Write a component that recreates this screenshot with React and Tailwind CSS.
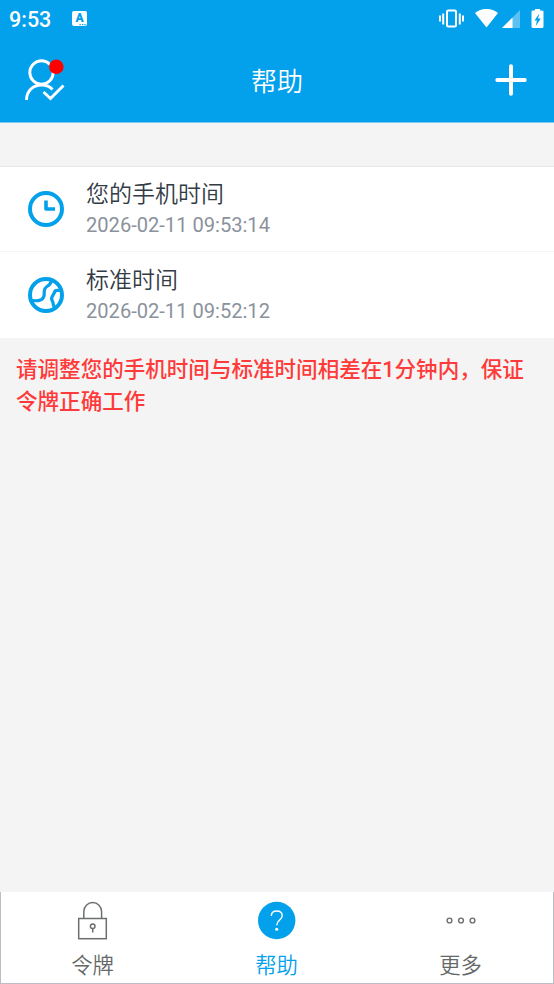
import React, { useState } from 'react'

const ProfileIcon = () => (
  <svg width="44" height="44" viewBox="0 0 44 44" fill="none" stroke="#fff" strokeWidth="2.9">
    <circle cx="19.500" cy="14.500" r="11.700" />
    <path d="M4.500 42C4.500 33 11 27 19.500 27c4.500 0 8.500 1.600 11 4.500" />
    <path d="M21.500 34l7 6.500L41.500 27.500" />
    <circle cx="34.300" cy="8.800" r="7.300" fill="#f00" stroke="none" />
  </svg>
)

const ClockIcon = () => (
  <svg width="36" height="36" viewBox="0 0 36 36" fill="none" stroke="#03a0eb" strokeWidth="4">
    <circle cx="18" cy="18" r="16" />
    <path d="M18 9.500V18h9" strokeWidth="3.600" strokeLinejoin="round" />
  </svg>
)

const GlobeIcon = () => (
  <svg width="36" height="36" viewBox="0 0 36 36" fill="none" stroke="#03a0eb">
    <circle cx="18" cy="18" r="16" strokeWidth="4" />
    <path d="M2 23c4 1 8 1 11-.3 2.500-1.200 3.300-3.700 3.200-6.200C16 13 16.500 11 19 9.500c2.500-1.500 4-3 4.500-6" strokeWidth="3.200" />
    <path d="M34 13.500l-5-.2c-1.500 0-2.200.8-2.500 2L24 20c-.8 1.500-.3 3 .6 4.500.8 1.500.4 2.500.9 4 .4 1.200 1 1.800 1.500 2.500" strokeWidth="3.200" />
  </svg>
)

const LockIcon = () => (
  <svg width="38" height="40" viewBox="0 0 38 40" fill="none" stroke="#6b706f" strokeWidth="1.500">
    <path d="M9.800 17.500V10.500a8.900 8.900 0 0 1 17.800 0v7" />
    <rect x="4.700" y="17.500" width="27.600" height="20.200" />
    <circle cx="18.700" cy="25.200" r="2.300" />
    <path d="M18.700 27.500v4" />
  </svg>
)

const HelpIcon = () => (
  <svg width="38" height="40" viewBox="0 0 38 40" fill="none">
    <circle cx="18.700" cy="19.500" r="18.700" fill="#03a0eb" />
    <path d="M13.300 15c0-3.200 2.200-5 5.400-5s5.500 1.900 5.500 4.800c0 4.200-5.500 4.500-5.500 9.500" stroke="#fff" strokeWidth="1.400" />
    <circle cx="18.700" cy="28.200" r="1.500" fill="#fff" />
  </svg>
)

const MoreIcon = () => (
  <svg width="38" height="40" viewBox="0 0 38 40" fill="none" stroke="#6b706f" strokeWidth="1.400">
    <circle cx="7.500" cy="19.500" r="2.400" />
    <circle cx="19" cy="19.500" r="2.400" />
    <circle cx="30.500" cy="19.500" r="2.400" />
  </svg>
)

const rows = [
  { title: '您的手机时间', time: '2026-02-11 09:53:14', icon: ClockIcon },
  { title: '标准时间', time: '2026-02-11 09:52:12', icon: GlobeIcon },
]

const tabs = [
  { label: '令牌', icon: LockIcon },
  { label: '帮助', icon: HelpIcon },
  { label: '更多', icon: MoreIcon },
]

function StatusBar() {
  return (
    <div className="h-[37px] flex items-center justify-between pl-[9px] pr-[10px]">
      <div className="flex items-center">
        <span className="w-[63px] text-[21.500px] leading-none font-medium pt-[2px]">9:53</span>
        <div className="w-[15px] h-[15px] bg-white rounded-[2px] flex flex-col items-center">
          <span className="text-[#03a0eb] text-[12px] leading-[12px] font-black pt-[1px]">A</span>
          <svg width="15" height="2" viewBox="0 0 15 2" fill="#03a0eb">
            <path d="M7.500 0h1.300v1.300H7.500zM10 0h1.300v1.300H10zM12.300 0h1.300v1.300h-1.300z" />
          </svg>
        </div>
      </div>
      <svg width="105" height="20" viewBox="0 0 105 20" fill="#fff">
        <rect x="8" y="1.500" width="9" height="16" rx="1.200" fill="none" stroke="#fff" strokeWidth="2" />
        <path d="M0 6.500h2v6H0zM3.200 4.500h2v11h-2zM19.800 4.500h2v11h-2zM23 6.500h2v6h-2z" />
        <path d="M36 4C43-1.500 52-1.500 59 4L47.500 18.500z" />
        <path d="M81 1V19H63z" opacity=".35" />
        <path d="M73.500 8.500v10.500H63z" />
        <path fillRule="evenodd" d="M96 0h5v1.500H103q1.500 0 1.500 1.300v14.700q0 1.500-1.500 1.500H94q-1.500 0-1.500-1.500V2.800Q92.500 1.500 94 1.500h2zM100.300 4.500L95.500 11.500h2.400L96.800 17l5-7.500h-2.700z" />
      </svg>
    </div>
  )
}

export default function App() {
  const [active, setActive] = useState('帮助')

  return (
    <div className="h-screen flex flex-col bg-[#f4f4f4] font-[Roboto,'Noto_Sans_CJK_SC',sans-serif]">
      <header className="h-[123px] shrink-0 bg-[#03a0eb] text-white border-b border-[#79c9f0]">
        <StatusBar />
        <div className="h-[85px] grid grid-cols-3 items-center px-[22px]">
          <button className="justify-self-start"><ProfileIcon /></button>
          <h1 className="text-[26px] leading-[38px] text-center font-[350] pt-[5px]">帮助</h1>
          <button className="justify-self-end pr-[5px]">
            <svg width="32" height="32" viewBox="0 0 32 32" stroke="#fff" strokeWidth="4" strokeLinecap="round">
              <path d="M16 2.300v27.400M2.300 16h27.400" />
            </svg>
          </button>
        </div>
      </header>

      <main className="flex-1 pt-[43px]">
        <div className="bg-white border-t border-[#e5e5e5]">
          {rows.map(({ title, time, icon: Icon }) => (
            <div key={title} className="h-[86px] flex items-center pl-7 gap-[22px] border-b border-[#f4f4f4] last:border-b-0 first:h-[85px]">
              <Icon />
              <div>
                <div className="text-[23px] leading-[34px] text-[#333b45] font-[350] pt-[1px]">{title}</div>
                <div className="text-[20.100px] leading-[29px] text-[#8b929c] pb-[1px] -mt-px">{time}</div>
              </div>
            </div>
          ))}
        </div>
        <p className="px-4 pt-[16px] text-[21.550px] leading-[31.500px] font-medium text-[#ff3a3a]">
          请调整您的手机时间与标准时间相差在1分钟内，保证令牌正确工作
        </p>
      </main>

      <nav className="h-[92px] shrink-0 bg-white grid grid-cols-3 border-x border-b border-[#bdbdc5]">
        {tabs.map(({ label, icon: Icon }) => (
          <button
            key={label}
            onClick={() => setActive(label)}
            className={`flex flex-col items-center pt-[9px] text-[21.300px] leading-8 font-[350] ${active === label ? 'text-[#03a0eb]' : 'text-[#646867]'}`}
          >
            <Icon />
            <span className="mt-[9px] pr-px">{label}</span>
          </button>
        ))}
      </nav>
    </div>
  )
}
